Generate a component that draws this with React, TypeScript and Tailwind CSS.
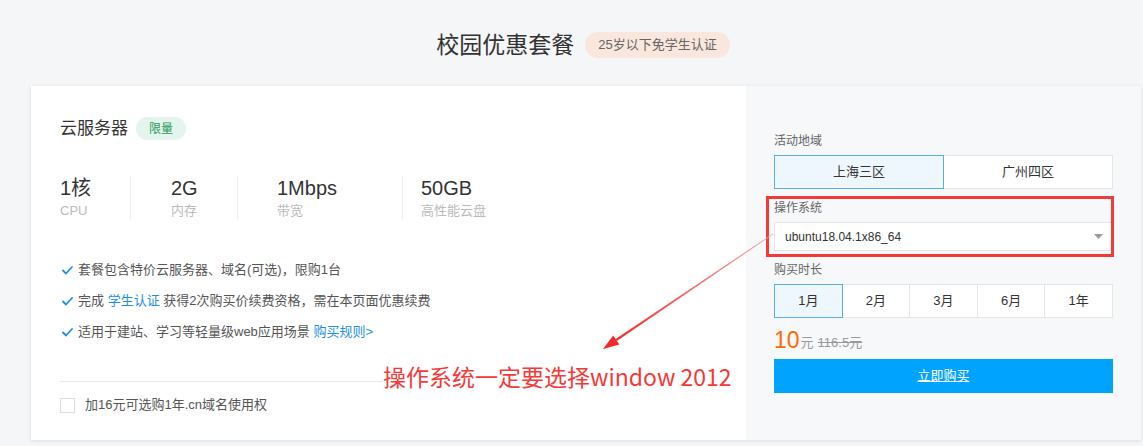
import React from "react";

const FONT = '"Liberation Sans", "Noto Sans CJK SC", sans-serif';

function Check() {
  return (
    <svg width="11" height="9" viewBox="0 0 11 9" className="shrink-0">
      <path d="M1 4.5 L4 7.5 L10 1" fill="none" stroke="#1e8fe6" strokeWidth="1.8" strokeLinecap="round" strokeLinejoin="round" />
    </svg>
  );
}

export default function App() {
  const durations = ["1月", "2月", "3月", "6月", "1年"];
  return (
    <div className="relative w-full h-[446px] bg-[#f5f6f8] overflow-hidden" style={{ fontFamily: FONT }}>
      {/* title */}
      <div className="ml-[31px] mr-[8px] pt-[32px] flex justify-center items-center h-[58px]">
        <div className="flex items-center h-[26px]">
          <span className="text-[23px] leading-[26px] text-[#333]">校园优惠套餐</span>
          <span className="ml-[11px] h-[26px] px-[13px] rounded-full bg-[#f9e7dd] text-[13px] text-[#666] flex items-center">25岁以下免学生认证</span>
        </div>
      </div>

      {/* card */}
      <div className="ml-[31px] mr-[2px] mt-[28px] h-[354px] flex shadow-[0_1px_4px_rgba(0,0,0,0.1)]">
        {/* left */}
        <div className="w-[715px] bg-white px-[29px] pt-[31px]">
          <div className="flex items-center h-[23px]">
            <span className="text-[17px] text-[#333]">云服务器</span>
            <span className="ml-[8px] h-[23px] px-[13px] rounded-full bg-[#e3f5ec] text-[12px] text-[#2b9a5d] flex items-center">限量</span>
          </div>

          <div className="mt-[36px] flex">
            <div className="w-[71px] border-r border-[#eeeeee]">
              <div className="text-[20px] leading-[24px] text-[#333]">1核</div>
              <div className="text-[13px] leading-[18px] mt-[2px] text-[#bbb]">CPU</div>
            </div>
            <div className="w-[107px] pl-[40px] border-r border-[#eeeeee]">
              <div className="text-[20px] leading-[24px] text-[#333]">2G</div>
              <div className="text-[13px] leading-[18px] mt-[2px] text-[#bbb]">内存</div>
            </div>
            <div className="w-[165px] pl-[39px] border-r border-[#eeeeee]">
              <div className="text-[20px] leading-[24px] text-[#333]">1Mbps</div>
              <div className="text-[13px] leading-[18px] mt-[2px] text-[#bbb]">带宽</div>
            </div>
            <div className="pl-[18px]">
              <div className="text-[20px] leading-[24px] text-[#333]">50GB</div>
              <div className="text-[13px] leading-[18px] mt-[2px] text-[#bbb]">高性能云盘</div>
            </div>
          </div>

          <div className="mt-[41px] flex flex-col gap-[13px] text-[13px] leading-[18px] text-[#555]">
            <div className="flex items-center gap-[5px] pl-[2px]">
              <Check />
              <span>套餐包含特价云服务器、域名(可选)，限购1台</span>
            </div>
            <div className="flex items-center gap-[5px] pl-[2px]">
              <Check />
              <span>完成 <span className="text-[#1e8fe6]">学生认证</span> 获得2次购买价续费资格，需在本页面优惠续费</span>
            </div>
            <div className="flex items-center gap-[5px] pl-[2px]">
              <Check />
              <span>适用于建站、学习等轻量级web应用场景 <span className="text-[#1e8fe6]">购买规则&gt;</span></span>
            </div>
          </div>

          <div className="mt-[40px] border-t border-[#e8e8e8]" />

          <div className="mt-[14px] flex items-center">
            <span className="w-[15px] h-[15px] border border-[#dddddd] bg-white" />
            <span className="ml-[10px] text-[13px] leading-[18px] text-[#555]">加16元可选购1年.cn域名使用权</span>
          </div>
        </div>

        {/* right */}
        <div className="relative flex-1 bg-[#f7f8fa] px-[28px] pt-[47px]">
          <div className="text-[12px] leading-[16px] text-[#666]">活动地域</div>
          <div className="mt-[6px] flex h-[34px] text-[13px] text-[#333]">
            <div className="flex-1 flex items-center justify-center bg-[#eef7fd] border border-[#5aaee8]">上海三区</div>
            <div className="flex-1 flex items-center justify-center bg-white border border-l-0 border-[#e5e5e5]">广州四区</div>
          </div>

          <div className="mt-[11px] text-[12px] leading-[16px] text-[#666]">操作系统</div>
          <div className="mt-[6px] h-[29px] bg-white border border-[#e5e5e5] flex items-center justify-between pl-[10px] pr-[9px]">
            <span className="text-[12px] text-[#333]">ubuntu18.04.1x86_64</span>
            <svg width="9" height="5" viewBox="0 0 9 5"><path d="M0 0 H9 L4.5 5 Z" fill="#999" /></svg>
          </div>

          <div className="mt-[11px] text-[12px] leading-[16px] text-[#666]">购买时长</div>
          <div className="mt-[6px] flex h-[34px] text-[13px] text-[#333]">
            {durations.map((d, i) => (
              <div
                key={d}
                className={
                  i === 0
                    ? "flex-1 flex items-center justify-center bg-[#eef7fd] border border-[#5aaee8]"
                    : "flex-1 flex items-center justify-center bg-white border border-l-0 border-[#e5e5e5]"
                }
              >
                {d}
              </div>
            ))}
          </div>

          <div className="mt-[10px] h-[24px] flex items-end">
            <span className="text-[23px] leading-[24px] text-[#ff6a00]">10</span>
            <span className="text-[13px] leading-[18px] text-[#999] ml-[1px]">元</span>
            <span className="text-[13px] leading-[18px] text-[#999] ml-[4px] line-through">116.5元</span>
          </div>

          <div className="mt-[7px] h-[34px] bg-[#00a4ff] flex items-center justify-center text-[13px] text-white underline">立即购买</div>

          {/* red annotation box */}
          <div className="absolute left-[20px] top-[110px] w-[348px] h-[61px] border-[3px] border-[#f23a3a] pointer-events-none" />
        </div>
      </div>

      {/* annotation arrow */}
      <svg className="absolute left-0 top-0 pointer-events-none" width="1143" height="446" viewBox="0 0 1143 446">
        <defs>
          <linearGradient id="ag" x1="773" y1="234" x2="603" y2="349" gradientUnits="userSpaceOnUse">
            <stop offset="0" stopColor="#f7a0a0" />
            <stop offset="1" stopColor="#f02a2a" />
          </linearGradient>
        </defs>
        <polygon points="773.22,234.33 772.78,233.67 615.58,339.05 616.92,341.03" fill="url(#ag)" />
        <polygon points="603,349 619.33,344.6 613.17,335.5" fill="#f02a2a" />
      </svg>

      {/* annotation text */}
      <div className="absolute left-[383px] top-[362px] bg-white text-[23px] leading-[28px] text-[#f53838] pr-[2px]" style={{ fontFamily: '"Noto Sans CJK SC", sans-serif' }}>
        操作系统一定要选择window 2012
      </div>
    </div>
  );
}
